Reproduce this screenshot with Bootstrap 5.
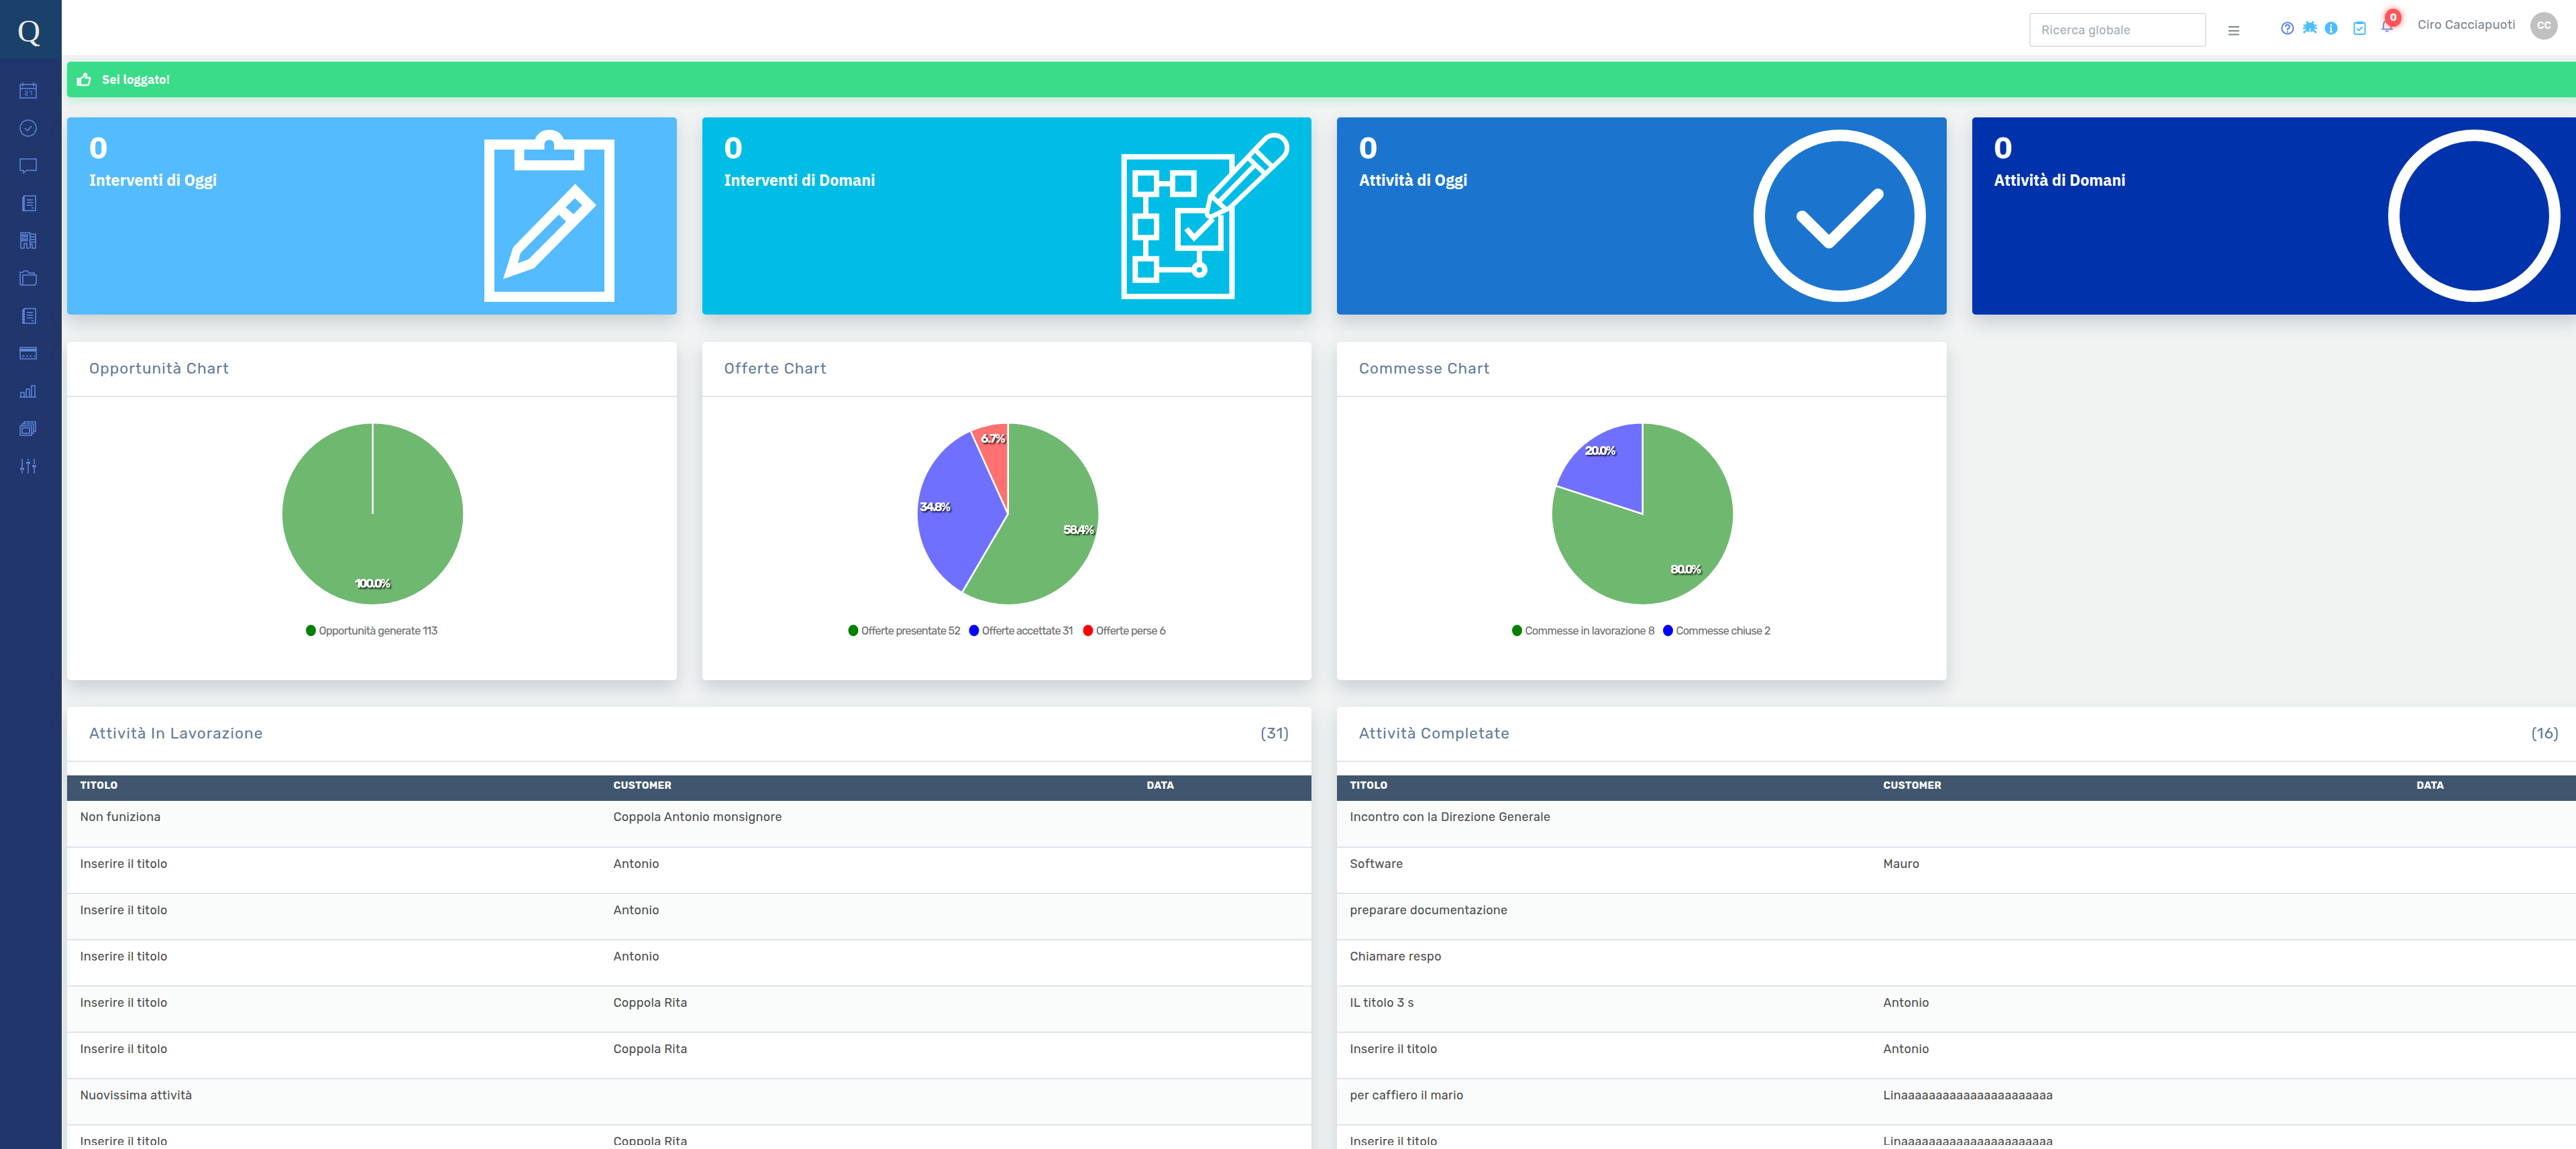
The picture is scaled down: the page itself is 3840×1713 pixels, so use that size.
<!DOCTYPE html>
<html lang="it">
<head>
    <meta charset="UTF-8">
    <meta name="viewport" content="width=device-width, initial-scale=1.0">
    <title>Dashboard</title>
    <link href="https://cdn.jsdelivr.net/npm/bootstrap@5.3.0/dist/css/bootstrap.min.css" rel="stylesheet">
    <style>
        body {
            font-family: Rubik, Inter, "Liberation Sans", sans-serif;
            background: #f1f3f3;
            color: #4c4c4c;
            height: 1713px;
            overflow: hidden;
        }
        svg { display: block; }
        .sidebar { width: 92px; height: 1713px; background: #21366d; }
        .logo {
            height: 87px;
            background: #1a4169;
            color: #ecebe4;
            font: 47px/76px "Liberation Serif", serif;
            padding: 8px 0 0 26px;
        }
        .side-nav { padding-top: 20px; }
        .side-nav .nav-link {
            height: 56px;
            padding: 0 0 0 29px;
            display: flex;
            align-items: center;
        }
        .side-nav svg {
            width: 26px;
            height: 26px;
            fill: none;
            stroke: #6288dc;
            stroke-width: 1.5;
        }
        .topbar-bg { background: #fff; }
        .topbar { width: 3748px; height: 82px; }
        .search {
            width: 264px;
            height: 51px;
            margin: 19px 33px 0 0;
            border: 2px solid #dfe3e8;
            border-radius: 4px;
            font-size: 18px;
            padding: 0 16px;
            letter-spacing: .35px;
        }
        .search::placeholder { color: #a3adb9; }
        .user-name { font-size: 18.5px; color: #7d858f; margin-top: 23px; line-height: 28px; letter-spacing: .3px; }
        .avatar {
            width: 41px;
            height: 41px;
            margin: 18px 27px 0 22px;
            background: #c1c1c1;
            color: #fff;
            font-size: 15px;
            font-weight: 600;
        }
        .counter {
            left: 169px;
            top: 13px;
            width: 25px;
            height: 27px;
            border-radius: 50%;
            background: #ff5558;
            box-shadow: 0 0 10px rgba(255, 60, 60, .75);
            font-size: 15px;
            line-height: 27px;
        }
        .content { width: 3748px; margin-left: 8px; padding-top: 10px; }
        .notice {
            height: 53px;
            background: #3adc8a;
            color: #fff;
            border-radius: 5px;
            box-shadow: 0 5px 14px rgba(58, 220, 138, .3);
            font: bold 18px "IBM Plex Sans", "Open Sans", sans-serif;
            letter-spacing: .2px;
            padding-left: 14px;
            margin-bottom: 30px;
        }
        .grid { --bs-gutter-x: 38px; flex-wrap: nowrap; }
        .panel {
            background: #fff;
            border-radius: 5px;
            box-shadow: 0 12px 26px rgba(70, 90, 110, .24);
        }
        .tile {
            height: 293.5px;
            color: #fff;
            font-family: "IBM Plex Sans", "Open Sans", sans-serif;
            font-weight: bold;
            padding-left: 33px;
        }
        .tile svg { width: 300px; height: 293px; }
        .tile-num { font-size: 45px; line-height: 50px; margin-top: 19px; }
        .tile-label { font-size: 23.2px; line-height: 32px; margin-top: 8px; }
        .tile-1 { background: #54bbff; }
        .tile-2 { background: #00bde6; }
        .tile-3 { background: #1b75cf; }
        .tile-4 { background: #0033ab; }
        .panel-head {
            height: 82px;
            padding: 0 33px;
            border-bottom: 2px solid #e1e5ea;
            color: #627a97;
            font-size: 22.5px;
            letter-spacing: 1.1px;
        }
        .chart-panel { height: 504px; margin-top: 41.5px; }
        .chart-panel svg { width: 908px; height: 420px; }
        .slices path, .slices circle, .slices line { stroke: #fff; stroke-width: 2.5; }
        .pct {
            font: bold 18px Rubik, "Liberation Sans", sans-serif;
            fill: #fff;
            filter: drop-shadow(2px 2px 1px rgba(0, 0, 0, .75));
        }
        .legend-text { font: 16.3px Rubik, "Liberation Sans", sans-serif; fill: #6c6c6c; }
        .list-panel { height: 720px; margin-top: 40px; }
        .table-wrap { height: 551px; margin-top: 20px; overflow: hidden; }
        .tasks { table-layout: fixed; font-size: 18px; margin: 0; }
        .tasks th {
            height: 38px;
            padding: 0 20px 0 19.5px;
            background: #40566e;
            color: #fff;
            font-size: 15px;
            line-height: 30px;
            font-weight: 700;
            border: 0;
            vertical-align: top;
            letter-spacing: .4px;
        }
        .tasks td {
            height: 69px;
            padding: 11px 20px 0 19.5px;
            border-bottom: 2px solid #e0e4ea;
            color: #4c4c4c;
            background: #fff;
            line-height: 26px;
            letter-spacing: .36px;
            box-shadow: none;
        }
        .tasks tbody tr:nth-child(odd) td { background: #fafcfb; }
    </style>
</head>
<body class="d-flex">

<aside class="sidebar flex-shrink-0">
    <div class="logo">Q</div>
    <nav class="side-nav nav flex-column">
        <a class="nav-link"><svg viewBox="0 0 26 26"><path d="M1 4h24v20H1zM1 10h24M5 1v6M21 1v6M3 4h5M18 4h5"/><path d="M8 14h4v3H9v3h4M15 14h3v6" stroke-width="1"/></svg></a>
        <a class="nav-link"><svg viewBox="0 0 26 26"><circle cx="13" cy="13" r="12"/><path d="M8 13l4 4 6-7"/></svg></a>
        <a class="nav-link"><svg viewBox="0 0 26 26"><path d="M1 3h24v17H11l-5 4v-4H1z"/></svg></a>
        <a class="nav-link"><svg viewBox="0 0 26 26"><path d="M7 2h17v22H7zM7 2L5 5v19h2M4 6h4M4 10h4M4 14h4M4 18h4M4 22h4M11 8h9M11 12h9M11 16h9M18 20h3"/></svg></a>
        <a class="nav-link"><svg viewBox="0 0 26 26"><path d="M2 24V1h14v23M16 3h8v21h-5v-6h-4M2 24h5v-7h4v7h4M4 4h3v3H4zM9 4h3v3H9zM4 10h3v3H4zM9 10h3v3H9zM16 7h8M16 11h8M16 15h8"/></svg></a>
        <a class="nav-link"><svg viewBox="0 0 26 26"><path d="M1 22V4h4l2-2h5l2 3h8v3h3v12l-2 3H3zM5 22V8h17"/></svg></a>
        <a class="nav-link"><svg viewBox="0 0 26 26"><path d="M7 2h17v22H7zM7 2L5 5v19h2M4 6h4M4 10h4M4 14h4M4 18h4M4 22h4M11 8h9M11 12h9M11 16h9M18 20h3"/></svg></a>
        <a class="nav-link"><svg viewBox="0 0 26 26"><path d="M1 4h24v17H1zM4 17h4M10 17h3M15 17h3M21 17h2"/><path d="M1 8h24" stroke-width="4"/></svg></a>
        <a class="nav-link"><svg viewBox="0 0 26 26"><path d="M0 22h25M2 22v-7h5v7M10 22V10h5v12M18 22V5h5v17"/></svg></a>
        <a class="nav-link"><svg viewBox="0 0 26 26"><path d="M1 9h17v14H1zM4 9V6h17v14h-3M7 6V3h17v14h-3M4 12h11v8H4z"/></svg></a>
        <a class="nav-link"><svg viewBox="0 0 26 26"><path d="M4 2v13M4 19v5M13 2v3M13 10v14M22 2v8M22 15v9"/><path d="M1 17h6M10 8h6M19 13h6" stroke-width="3"/></svg></a>
    </nav>
</aside>

<main class="flex-shrink-0">
    <header class="topbar-bg">
        <div class="topbar d-flex justify-content-end align-items-start">
            <input type="text" class="form-control search" placeholder="Ricerca globale">
            <svg class="me-5 flex-shrink-0" width="16" height="82"><path d="M0 40h16M0 46h16M0 51.5h16" stroke="#7d858f" stroke-width="2"/></svg>
            <div class="flex-shrink-0 position-relative">
                <svg width="218" height="82">
                    <g fill="none" stroke="#5b7ff2" stroke-width="2">
                        <circle cx="24" cy="42" r="8.600"/>
                        <path d="M21 40q0-3 3-3t3 3q0 2-3 3.500v1.500M24 46.500v2"/>
                    </g>
                    <path d="M52 32l3 3h5l3-3M51 36.500h13" fill="none" stroke="#4cbcff" stroke-width="2.500"/>
                    <path d="M52 37h11v9q-5.500 4-11 0z" fill="#4cbcff"/>
                    <path d="M48 37l4 3M67 37l-4 3M47 42h21M48 49l4-4M67 49l-4-4" fill="none" stroke="#4cbcff" stroke-width="2.500"/>
                    <path d="M57.500 42v8" stroke="#fff" stroke-width="1.500"/>
                    <circle cx="89" cy="42" r="9.700" fill="#4cbcff"/>
                    <path d="M89 36v3M87 41.500h2v6M86.500 47.500h5" stroke="#fff" stroke-width="2" fill="none"/>
                    <g fill="none" stroke="#4cbcff" stroke-width="2">
                        <rect x="123.500" y="34" width="16" height="17" rx="1.500"/>
                        <path d="M126.500 34h10" stroke-width="4"/>
                        <path d="M127.500 42.500l3 3 5-5.500"/>
                    </g>
                    <path d="M164 43.500h17M167 43v-6q0-5 5.500-6 5.500 1 5.500 6v6M170 46.500h4.500" fill="none" stroke="#7b8cf0" stroke-width="2.200"/>
                </svg>
                <span class="counter position-absolute text-center text-white fw-bold">0</span>
            </div>
            <div class="user-name flex-shrink-0">Ciro Cacciapuoti</div>
            <div class="avatar rounded-circle d-flex align-items-center justify-content-center flex-shrink-0">CC</div>
        </div>
    </header>

    <div class="content">
        <div class="notice d-flex align-items-center">
            <svg class="me-3" width="22" height="22" viewBox="0 0 22 22" fill="none" stroke="#fff" stroke-width="2.600"><path d="M6 9l5-3 1-4q3-1 3 2l-1 4h6v3l-2 7q-1 1-2 1H6z"/><path d="M2.500 8v12" stroke-width="4"/></svg>
            <span>Sei loggato!</span>
        </div>

        <!-- Contatori -->
        <div class="row grid">
            <div class="col-3">
                <div class="panel tile tile-1 d-flex justify-content-between">
                    <div><div class="tile-num">0</div><div class="tile-label">Interventi di Oggi</div></div>
                    <svg viewBox="0 0 300 293" fill="#fff" fill-rule="evenodd">
                        <path d="M13 33H88.500Q94 18.500 110 18.500T131.500 33H207V275H13zM28 48V260H192V48H162V79H58V48zM72.500 48V64H147V48H117V41Q117 33.500 110 33.500T102.500 41V48z"/>
                        <path d="M41 241L56 193.500 148.500 99 180 131 87 225zM124 145L67 202 63 217.500 79 211.500 135 155.500zM148 120.500L159 131 146 144.500 134 134z"/>
                    </svg>
                </div>
            </div>
            <div class="col-3">
                <div class="panel tile tile-2 d-flex justify-content-between">
                    <div><div class="tile-num">0</div><div class="tile-label">Interventi di Domani</div></div>
                    <svg viewBox="0 0 300 293" fill="none" stroke="#fff" stroke-width="8">
                        <path d="M181.500 84V58.700H20.700V267H181.500V132"/>
                        <path d="M37.300 82.700h31.800v32H37.300zM93 82.700h31.800v32H93zM37.300 147.300h31.800v32H37.300zM37.300 210.700h31.800v32H37.300zM73 99h16M53 118v26M53 182v25M73 227.300h48M133 198v18"/>
                        <path d="M143 139H101V195H165V146"/>
                        <circle cx="133" cy="227.300" r="8"/>
                        <path d="M113.500 166l11.500 13.500L153.300 151"/>
                        <path d="M149.500 117.500L231 32A19 19 0 0 1 258 59L178 135 153 147Q143 150 144.500 140z" fill="#00bde6" stroke-width="7"/>
                        <path d="M215.800 48.300l24.500 24M205.400 60l24.500 23.300M214.600 72l-53.300 54.700M150 116.700l23.500 21.300" stroke-width="7"/>
                    </svg>
                </div>
            </div>
            <div class="col-3">
                <div class="panel tile tile-3 d-flex justify-content-between">
                    <div><div class="tile-num">0</div><div class="tile-label">Attività di Oggi</div></div>
                    <svg viewBox="0 0 300 293" fill="none" stroke="#fff" stroke-width="17" stroke-linecap="round" stroke-linejoin="round">
                        <circle cx="140.500" cy="146.800" r="120"/>
                        <path d="M84.500 147.500l40 39.500 73-72.500"/>
                    </svg>
                </div>
            </div>
            <div class="col-3">
                <div class="panel tile tile-4 d-flex justify-content-between">
                    <div><div class="tile-num">0</div><div class="tile-label">Attività di Domani</div></div>
                    <svg viewBox="0 0 300 293" fill="none" stroke="#fff" stroke-width="17">
                        <circle cx="140.500" cy="146.800" r="120"/>
                    </svg>
                </div>
            </div>
        </div>

        <!-- Grafici -->
        <div class="row grid">
            <div class="col-3">
                <div class="panel chart-panel">
                    <div class="panel-head d-flex align-items-center">Opportunità Chart</div>
                    <svg viewBox="0 0 908 420" class="pie" data-chart="0"></svg>
                </div>
            </div>
            <div class="col-3">
                <div class="panel chart-panel">
                    <div class="panel-head d-flex align-items-center">Offerte Chart</div>
                    <svg viewBox="0 0 908 420" class="pie" data-chart="1"></svg>
                </div>
            </div>
            <div class="col-3">
                <div class="panel chart-panel">
                    <div class="panel-head d-flex align-items-center">Commesse Chart</div>
                    <svg viewBox="0 0 908 420" class="pie" data-chart="2"></svg>
                </div>
            </div>
        </div>

        <!-- Attività -->
        <div class="row grid">
            <div class="col-6">
                <div class="panel list-panel">
                    <div class="panel-head d-flex align-items-center justify-content-between"><span>Attività In Lavorazione</span><span>(31)</span></div>
                    <div class="table-wrap">
                        <table class="table tasks">
                            <colgroup><col width="795"><col width="795"><col></colgroup>
                            <thead><tr><th>TITOLO</th><th>CUSTOMER</th><th>DATA</th></tr></thead>
                            <tbody id="openTasks"></tbody>
                        </table>
                    </div>
                </div>
            </div>
            <div class="col-6">
                <div class="panel list-panel">
                    <div class="panel-head d-flex align-items-center justify-content-between"><span>Attività Completate</span><span>(16)</span></div>
                    <div class="table-wrap">
                        <table class="table tasks">
                            <colgroup><col width="795"><col width="795"><col></colgroup>
                            <thead><tr><th>TITOLO</th><th>CUSTOMER</th><th>DATA</th></tr></thead>
                            <tbody id="doneTasks"></tbody>
                        </table>
                    </div>
                </div>
            </div>
        </div>
    </div>
</main>

<script src="https://cdn.jsdelivr.net/npm/bootstrap@5.3.0/dist/js/bootstrap.bundle.min.js"></script>
<script>
    // label: [x, baseline, width]; legend: [dot x, text width]
    const charts = [
        [{ name: 'Opportunità generate', value: 113, fill: '#6fb870', dot: '#008000', label: [429, 283.5, 53], legend: [363.5, 177] }],
        [
            { name: 'Offerte presentate', value: 52, fill: '#6fb870', dot: '#008000', label: [538, 203.5, 46], legend: [225, 148] },
            { name: 'Offerte accettate', value: 31, fill: '#7070ff', dot: '#0000ff', label: [324, 169.5, 46], legend: [405, 135.5] },
            { name: 'Offerte perse', value: 6, fill: '#ff7070', dot: '#ff0000', label: [415, 68, 36.5], legend: [575, 104] }
        ],
        [
            { name: 'Commesse in lavorazione', value: 8, fill: '#6fb870', dot: '#008000', label: [497, 262.5, 46], legend: [268.5, 193.5] },
            { name: 'Commesse chiuse', value: 2, fill: '#7070ff', dot: '#0000ff', label: [369.5, 85.5, 46], legend: [493.5, 141] }
        ]
    ];
    const cx = 455.6, cy = 174.2, r = 136;

    function point(share) {
        const a = share * 2 * Math.PI;
        return `${cx + r * Math.sin(a)} ${cy - r * Math.cos(a)}`;
    }

    document.querySelectorAll('.pie').forEach(svg => {
        const slices = charts[svg.dataset.chart];
        const total = slices.reduce((sum, s) => sum + s.value, 0);
        let start = 0, shapes = '', texts = '';
        slices.forEach(s => {
            const share = s.value / total;
            if (share === 1) {
                shapes += `<circle cx="${cx}" cy="${cy}" r="${r}" fill="${s.fill}"/><line x1="${cx}" y1="${cy}" x2="${cx}" y2="${cy - r}"/>`;
            } else {
                shapes += `<path fill="${s.fill}" d="M${cx} ${cy}L${point(start)}A${r} ${r} 0 ${share > .5 ? 1 : 0} 1 ${point(start + share)}z"/>`;
            }
            start += share;
            texts += `<text class="pct" x="${s.label[0]}" y="${s.label[1]}" textLength="${s.label[2]}">${(share * 100).toFixed(1)}%</text>
                <ellipse cx="${s.legend[0]}" cy="348" rx="7.500" ry="8.500" fill="${s.dot}"/>
                <text class="legend-text" x="${s.legend[0] + 12}" y="354" textLength="${s.legend[1]}">${s.name} ${s.value}</text>`;
        });
        svg.innerHTML = `<g class="slices">${shapes}</g>${texts}`;
    });

    const lina = 'Lin' + 'a'.repeat(22);
    const openTasks = [
        ['Non funiziona', 'Coppola Antonio monsignore'],
        ['Inserire il titolo', 'Antonio'],
        ['Inserire il titolo', 'Antonio'],
        ['Inserire il titolo', 'Antonio'],
        ['Inserire il titolo', 'Coppola Rita'],
        ['Inserire il titolo', 'Coppola Rita'],
        ['Nuovissima attività', ''],
        ['Inserire il titolo', 'Coppola Rita']
    ];
    const doneTasks = [
        ['Incontro con la Direzione Generale', ''],
        ['Software', 'Mauro'],
        ['preparare documentazione', ''],
        ['Chiamare respo', ''],
        ['IL titolo 3 s', 'Antonio'],
        ['Inserire il titolo', 'Antonio'],
        ['per caffiero il mario', lina],
        ['Inserire il titolo', lina]
    ];

    function renderTasks(id, tasks) {
        document.getElementById(id).innerHTML = tasks
            .map(t => `<tr><td>${t[0]}</td><td>${t[1]}</td><td></td></tr>`).join('');
    }
    renderTasks('openTasks', openTasks);
    renderTasks('doneTasks', doneTasks);
</script>
</body>
</html>
